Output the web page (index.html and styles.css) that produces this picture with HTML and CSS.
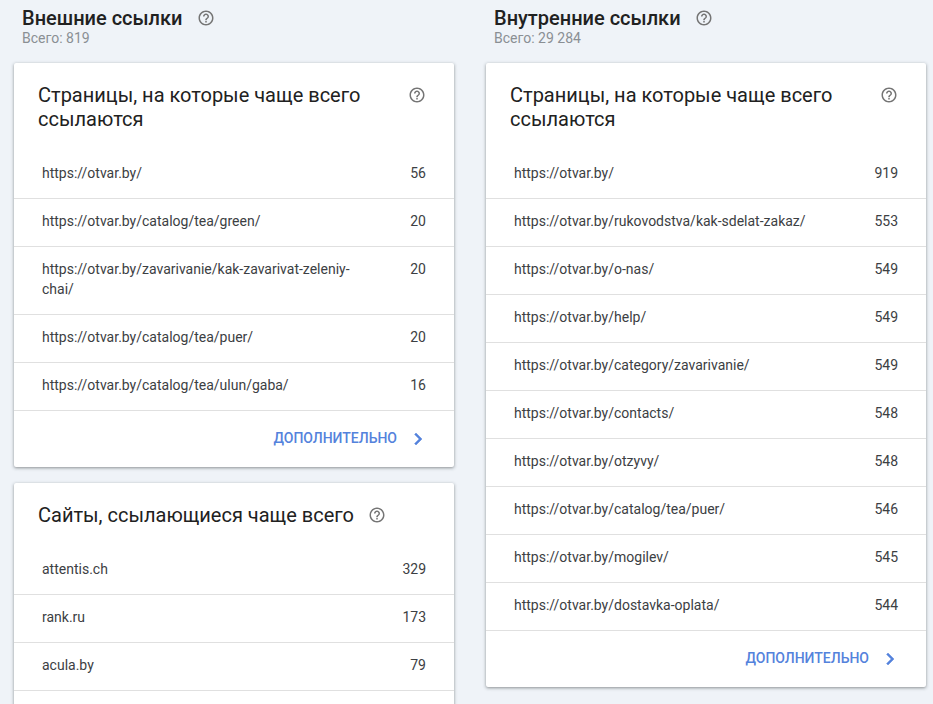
FILE: index.html
```html
<!DOCTYPE html>
<html lang="ru">
<head>
<meta charset="utf-8">
<title>Ссылки</title>
<link rel="stylesheet" href="styles.css">
</head>
<body>
<svg class="sprite" width="0" height="0" aria-hidden="true">
  <symbol id="help" viewBox="0 0 24 24"><path d="M11 18h2v-2h-2v2zm1-16C6.48 2 2 6.48 2 12s4.48 10 10 10 10-4.48 10-10S17.52 2 12 2zm0 18c-4.41 0-8-3.59-8-8s3.59-8 8-8 8 3.59 8 8-3.59 8-8 8zm0-14c-2.21 0-4 1.79-4 4h2c0-1.1.9-2 2-2s2 .9 2 2c0 2-3 1.75-3 5h2c0-2.25 3-2.5 3-5 0-2.21-1.79-4-4-4z"/></symbol>
  <symbol id="chev" viewBox="0 0 24 24"><path d="M10 6 8.59 7.41 13.17 12l-4.58 4.59L10 18l6-6z"/></symbol>
</svg>
<main class="page">
  <section class="col">
    <header class="col-head">
      <div class="col-title"><h2>Внешние ссылки</h2><svg class="help help-head"><use href="#help"/></svg></div>
      <div class="col-total">Всего: 819</div>
    </header>
    <div class="card">
      <div class="card-head">
        <h3>Страницы, на которые чаще всего ссылаются</h3>
        <svg class="help help-card"><use href="#help"/></svg>
      </div>
      <ul class="rows">
        <li><span>https://otvar.by/</span><b>56</b></li>
        <li><span>https://otvar.by/catalog/tea/green/</span><b>20</b></li>
        <li><span>https://otvar.by/zavarivanie/kak-zavarivat-zeleniy-chai/</span><b>20</b></li>
        <li><span>https://otvar.by/catalog/tea/puer/</span><b>20</b></li>
        <li><span>https://otvar.by/catalog/tea/ulun/gaba/</span><b>16</b></li>
      </ul>
      <div class="card-foot"><a href="#">ДОПОЛНИТЕЛЬНО</a><svg class="chev"><use href="#chev"/></svg></div>
    </div>
    <div class="card">
      <div class="card-head card-head-inline">
        <h3>Сайты, ссылающиеся чаще всего</h3>
        <svg class="help help-inline"><use href="#help"/></svg>
      </div>
      <ul class="rows">
        <li><span>attentis.ch</span><b>329</b></li>
        <li><span>rank.ru</span><b>173</b></li>
        <li><span>acula.by</span><b>79</b></li>
        <li><span>&nbsp;</span><b>&nbsp;</b></li>
      </ul>
    </div>
  </section>
  <section class="col">
    <header class="col-head">
      <div class="col-title"><h2>Внутренние ссылки</h2><svg class="help help-head"><use href="#help"/></svg></div>
      <div class="col-total">Всего: 29 284</div>
    </header>
    <div class="card">
      <div class="card-head">
        <h3>Страницы, на которые чаще всего ссылаются</h3>
        <svg class="help help-card"><use href="#help"/></svg>
      </div>
      <ul class="rows">
        <li><span>https://otvar.by/</span><b>919</b></li>
        <li><span>https://otvar.by/rukovodstva/kak-sdelat-zakaz/</span><b>553</b></li>
        <li><span>https://otvar.by/o-nas/</span><b>549</b></li>
        <li><span>https://otvar.by/help/</span><b>549</b></li>
        <li><span>https://otvar.by/category/zavarivanie/</span><b>549</b></li>
        <li><span>https://otvar.by/contacts/</span><b>548</b></li>
        <li><span>https://otvar.by/otzyvy/</span><b>548</b></li>
        <li><span>https://otvar.by/catalog/tea/puer/</span><b>546</b></li>
        <li><span>https://otvar.by/mogilev/</span><b>545</b></li>
        <li><span>https://otvar.by/dostavka-oplata/</span><b>544</b></li>
      </ul>
      <div class="card-foot"><a href="#">ДОПОЛНИТЕЛЬНО</a><svg class="chev"><use href="#chev"/></svg></div>
    </div>
  </section>
</main>
</body>
</html>
```

FILE: styles.css
```css
html, body { margin: 0; height: 704px; overflow: hidden; }
body { background: #eff3f8; font-family: Roboto, "Liberation Sans", sans-serif; color: #212121; }
.sprite { position: absolute; }
.page { display: flex; gap: 32px; padding-left: 14px; height: 704px; overflow: hidden; }
.col { width: 440px; flex: none; }
.col-head { height: 63px; padding: 8px 0 0 8px; box-sizing: border-box; }
.col-title { display: flex; align-items: center; height: 20px; }
h2 { margin: 0; font-size: 20px; line-height: 20px; font-weight: 500; color: #212121; }
.col-total { font-size: 14px; line-height: 16px; margin-top: 2px; color: #8a8f94; }
.help { fill: #757575; display: block; flex: none; }
.help-head { width: 18px; height: 18px; margin-left: 14px; }
.card { background: #fff; border-radius: 2px; box-shadow: 0 1px 3px rgba(60,64,67,.45), 0 1px 4px rgba(60,64,67,.15); margin-bottom: 16px; }
.card-head { display: flex; justify-content: space-between; padding: 20px 28px 20px 24px; }
h3 { margin: 0; width: 340px; font-size: 20px; line-height: 24px; font-weight: 400; color: #212121; }
.help-card { width: 18px; height: 18px; margin-top: 3px; }
.card-head-inline { justify-content: flex-start; }
.card-head-inline h3 { width: auto; }
.help-inline { width: 18px; height: 18px; margin: 3px 0 0 14px; }
.rows { list-style: none; margin: 0; padding: 0; }
.rows li { display: flex; justify-content: space-between; align-items: flex-start; gap: 40px; padding: 12px 28px 15px; font-size: 14px; line-height: 20px; border-bottom: 1px solid #e0e0e0; color: #3c4043; }
.rows span { flex: 1; min-width: 0; overflow-wrap: anywhere; }
.rows b { font-weight: 400; color: #3c4043; }
.card-foot { display: flex; justify-content: flex-end; align-items: center; height: 56px; padding-right: 26px; }
.card-foot a { font-size: 14px; font-weight: 500; color: #5482dc; text-decoration: none; margin-bottom: 2px; }
.chev { width: 24px; height: 24px; fill: #5482dc; stroke: #5482dc; stroke-width: .5; margin-left: 9px; margin-right: -2px; }
```
